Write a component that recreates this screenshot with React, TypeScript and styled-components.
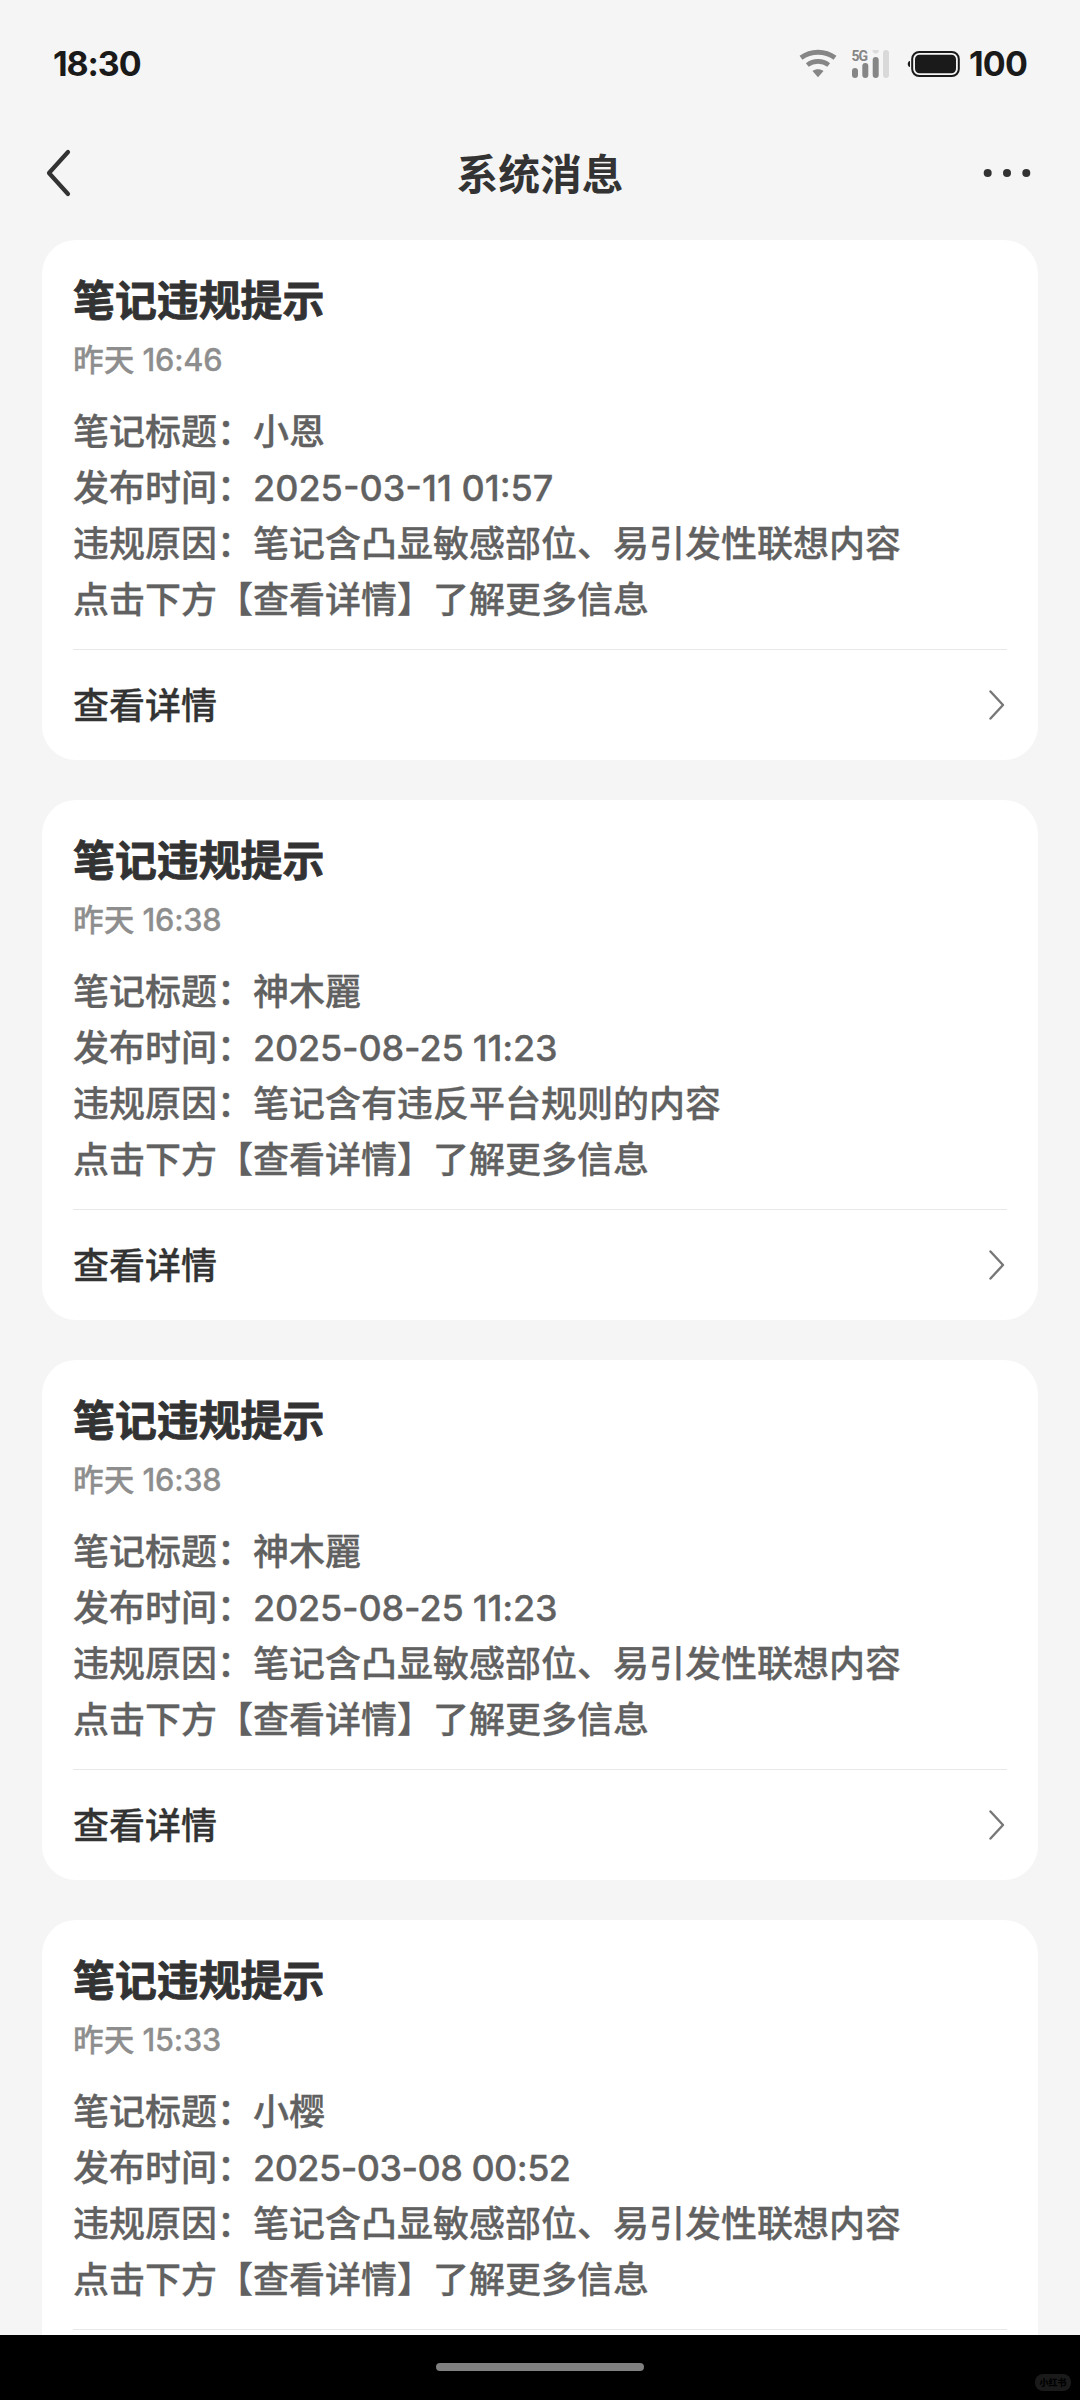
import { FC } from "react";
import { createGlobalStyle, styled, css } from "styled-components";

const GlobalStyle = createGlobalStyle`
  * {
    box-sizing: border-box;
  }

  body {
    margin: 0;
    background-color: #f5f5f5;
    font-family: Inter, "Noto Sans CJK SC", sans-serif;
  }

  svg {
    display: block;
    flex-shrink: 0;
  }
`;

const Screen = styled.div`
  display: flex;
  flex-direction: column;
  width: 1080px;
  height: 2400px;
  overflow: hidden;
  background-color: #f5f5f5;
`;

const StatusBar = styled.header`
  display: flex;
  align-items: center;
  flex-shrink: 0;
  height: 126px;
  padding: 1px 53px 0;
  color: #1a1a1a;
  font-size: 34px;
  font-weight: 700;
  line-height: 40px;

  .icons {
    display: flex;
    align-items: center;
    margin-left: auto;
  }

  .wifi {
    margin-right: 15px;
  }

  .signal {
    margin-right: 17px;
  }
`;

const Clock = styled.span`
  letter-spacing: -1.1px;
`;

const BatteryLevel = styled.span`
  width: 58px;
  margin-left: 9px;
  letter-spacing: -0.8px;
`;

const NavBar = styled.nav`
  display: grid;
  grid-template-columns: 1fr auto 1fr;
  align-items: center;
  flex-shrink: 0;
  height: 94px;
  padding: 0 48px 0 44px;
  color: #333;

  h1 {
    margin: 0 0 0 4px;
    padding-top: 4px;
    font-size: 41.8px;
    font-weight: 600;
    line-height: 60px;
  }

  .more {
    justify-self: end;
  }
`;

const MessageList = styled.main`
  display: flex;
  flex: 1;
  flex-direction: column;
  gap: 40px;
  min-height: 0;
  padding: 20px 42px 0;
  overflow: hidden;
`;

const Card = styled.article`
  flex-shrink: 0;
  height: 520px;
  padding: 31px 31px 0;
  border-radius: 34px;
  background-color: #fff;

  h2 {
    margin: 0;
    color: #333;
    font-size: 41.9px;
    font-weight: 700;
    line-height: 60px;
    -webkit-text-stroke: 0.8px #333;
  }

  time {
    display: block;
    margin-top: 7px;
    color: #8e8e8e;
    font-size: 30.7px;
    font-weight: 500;
    line-height: 44px;
    -webkit-text-stroke: 0.3px #8e8e8e;
  }
`;

const Details = styled.div`
  margin-top: 22px;
  color: #616161;
  font-size: 36px;
  font-weight: 500;
  line-height: 56px;
  -webkit-text-stroke: 0.3px #616161;

  p {
    margin: 0;
    white-space: nowrap;
  }
`;

const Digits = styled.span<{ $spacing: number }>(({ $spacing }) => {
  return css`
    letter-spacing: ${$spacing}px;
  `;
});

const CardLink = styled.a`
  display: flex;
  align-items: center;
  justify-content: space-between;
  height: 112px;
  margin-top: 21px;
  padding-right: 2px;
  border-top: 1px solid #e8e8e8;
  color: #333;
  font-size: 36px;
  font-weight: 500;
  line-height: 56px;
  -webkit-text-stroke: 0.3px #333;

  svg {
    margin-bottom: 2px;
  }
`;

const HomeBar = styled.footer`
  position: relative;
  display: flex;
  justify-content: center;
  flex-shrink: 0;
  height: 65px;
  padding-top: 28px;
  background-color: #000;

  .handle {
    width: 208px;
    height: 8px;
    border-radius: 4px;
    background-color: #808080;
  }
`;

const Watermark = styled.span`
  position: absolute;
  right: 9px;
  bottom: 9px;
  width: 36px;
  height: 17px;
  border-radius: 8px;
  background-color: #1a1a1a;
  color: #000;
  font-size: 9px;
  font-weight: 900;
  line-height: 17px;
  text-align: center;
`;

const WifiIcon: FC = () => (
  <svg className="wifi" width="38" height="30" viewBox="0 0 38 30" fill="none" stroke="#868686">
    <path d="M2 8.8C12 1.4 26 1.4 36 8.8" strokeWidth="4.8" />
    <path d="M8.300 16C14.600 11.200 23.400 11.200 29.700 16" strokeWidth="4.6" />
    <path d="M13.500 22C16.500 19.700 21.500 19.700 24.500 22L19 28.300Z" fill="#868686" stroke="none" />
  </svg>
);

const SignalIcon: FC = () => (
  <svg className="signal" width="38" height="30" viewBox="0 0 38 30">
    <text x="-0.500" y="11.600" fill="#868686" fontFamily="Roboto" fontSize="14" fontWeight="700" textLength="16.500">
      5G
    </text>
    <g fill="#868686">
      <rect x="0" y="19" width="6" height="10" rx="3" />
      <rect x="10.300" y="14" width="6" height="15" rx="3" />
      <rect x="20.700" y="8" width="6" height="21" rx="3" />
    </g>
    <path d="M20.700 1H26.700V3L23.700 5L20.700 3Z" fill="#dcdcdc" />
    <rect x="31" y="1" width="6" height="28" rx="3" fill="#d9d9d9" />
  </svg>
);

const BatteryIcon: FC = () => (
  <svg width="53" height="26" viewBox="0 0 53 26">
    <path d="M3 10C0 10 0 16 3 16Z" fill="#1a1a1a" />
    <rect x="5.200" y="1" width="46.600" height="24" rx="7" fill="none" stroke="#1a1a1a" strokeWidth="2" />
    <rect x="8" y="3.800" width="41" height="18.400" rx="4.500" fill="#1a1a1a" />
  </svg>
);

const BackIcon: FC = () => (
  <svg width="28" height="48" viewBox="0 0 28 48" fill="none" stroke="#333" strokeWidth="4.200" strokeLinecap="round" strokeLinejoin="round">
    <path d="M24 3L5 24L24 45" />
  </svg>
);

const MoreIcon: FC = () => (
  <svg className="more" width="50" height="10" viewBox="0 0 50 10" fill="#333">
    <circle cx="5.700" cy="5" r="4" />
    <circle cx="25" cy="5" r="4" />
    <circle cx="44.300" cy="5" r="4" />
  </svg>
);

const ArrowIcon: FC = () => (
  <svg width="16" height="32" viewBox="0 0 16 32" fill="none" stroke="#777" strokeWidth="2.400" strokeLinecap="round" strokeLinejoin="round">
    <path d="M1.500 2.500L14 16L1.500 29.500" />
  </svg>
);

interface Message {
  time: string;
  note: string;
  published: string;
  spacing: number;
  reason: string;
  // the card runs under the home bar, only its divider shows
  clipped?: boolean;
}

const messages: Message[] = [
  {
    time: "16:46",
    note: "小恩",
    published: "2025-03-11 01:57",
    spacing: 0,
    reason: "笔记含凸显敏感部位、易引发性联想内容",
  },
  {
    time: "16:38",
    note: "神木麗",
    published: "2025-08-25 11:23",
    spacing: -0.2,
    reason: "笔记含有违反平台规则的内容",
  },
  {
    time: "16:38",
    note: "神木麗",
    published: "2025-08-25 11:23",
    spacing: -0.2,
    reason: "笔记含凸显敏感部位、易引发性联想内容",
  },
  {
    time: "15:33",
    note: "小樱",
    published: "2025-03-08 00:52",
    spacing: -0.55,
    reason: "笔记含凸显敏感部位、易引发性联想内容",
    clipped: true,
  },
];

const MessageCard: FC<{ message: Message }> = ({ message }) => {
  return (
    <Card>
      <h2>笔记违规提示</h2>
      <time>
        昨天 <Digits $spacing={-0.2}>{message.time}</Digits>
      </time>
      <Details>
        <p>笔记标题：{message.note}</p>
        <p>
          发布时间：<Digits $spacing={message.spacing}>{message.published}</Digits>
        </p>
        <p>违规原因：{message.reason}</p>
        <p>点击下方【查看详情】了解更多信息</p>
      </Details>
      <CardLink>
        {!message.clipped && (
          <>
            查看详情
            <ArrowIcon />
          </>
        )}
      </CardLink>
    </Card>
  );
};

export default function App() {
  return (
    <Screen lang="zh-CN">
      <GlobalStyle />
      <StatusBar>
        <Clock>18:30</Clock>
        <div className="icons">
          <WifiIcon />
          <SignalIcon />
          <BatteryIcon />
          <BatteryLevel>100</BatteryLevel>
        </div>
      </StatusBar>
      <NavBar>
        <BackIcon />
        <h1>系统消息</h1>
        <MoreIcon />
      </NavBar>
      <MessageList>
        {messages.map((message, index) => (
          <MessageCard key={index} message={message} />
        ))}
      </MessageList>
      <HomeBar>
        <div className="handle" />
        <Watermark>小红书</Watermark>
      </HomeBar>
    </Screen>
  );
}
